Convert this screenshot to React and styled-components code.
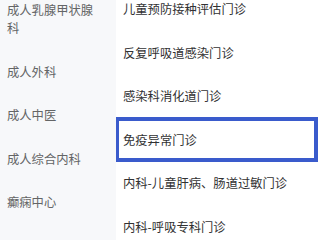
import React from 'react';
import styled, { createGlobalStyle } from 'styled-components';

const GlobalStyle = createGlobalStyle`
  html, body {
    margin: 0;
    padding: 0;
    background: #ffffff;
  }
  body {
    font-family: "Noto Sans CJK SC", "Noto Sans", sans-serif;
  }
`;

const Page = styled.div`
  display: flex;
  width: 320px;
  height: 240px;
  overflow: hidden;
`;

const SideNav = styled.div`
  width: 116px;
  flex-shrink: 0;
  background: #f7f8fa;
  overflow: hidden;
`;

const SideList = styled.div`
  margin-top: -11.5px;
`;

const SideItem = styled.div`
  padding: 12.75px 12px 12.75px 7px;
  font-size: 12.3px;
  line-height: 18px;
  color: #646566;
`;

const Content = styled.div`
  flex: 1;
  background: #ffffff;
  overflow: hidden;
`;

const ContentList = styled.div`
  margin-top: -12.75px;
  padding-right: 3px;
`;

const ContentItem = styled.div`
  height: 43.5px;
  display: flex;
  align-items: center;
  padding-left: 7px;
  font-size: 12.3px;
  color: #323233;
  outline: ${(p) => (p.$active ? '4px solid #3a5bcc' : 'none')};
  outline-offset: -3px;
`;

const departments = [
  '成人乳腺甲状腺科',
  '成人外科',
  '成人中医',
  '成人综合内科',
  '癫痫中心',
  '儿童保健科',
];

const clinics = [
  '儿童预防接种评估门诊',
  '反复呼吸道感染门诊',
  '感染科消化道门诊',
  '免疫异常门诊',
  '内科-儿童肝病、肠道过敏门诊',
  '内科-呼吸专科门诊',
];

export default function App() {
  return (
    <Page>
      <GlobalStyle />
      <SideNav>
        <SideList>
          {departments.map((name) => (
            <SideItem key={name}>{name}</SideItem>
          ))}
        </SideList>
      </SideNav>
      <Content>
        <ContentList>
          {clinics.map((name, index) => (
            <ContentItem key={name} $active={index === 3}>
              {name}
            </ContentItem>
          ))}
        </ContentList>
      </Content>
    </Page>
  );
}
